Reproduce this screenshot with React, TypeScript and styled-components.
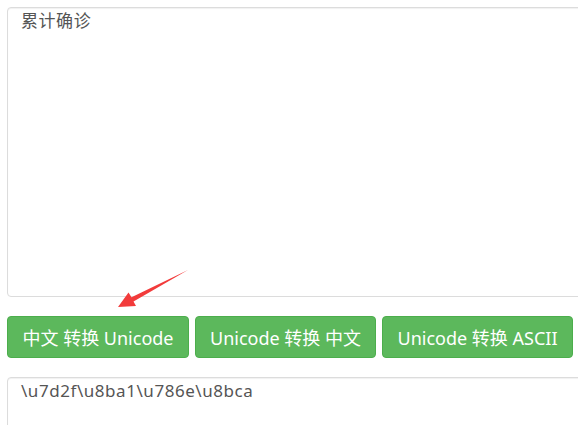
import styled, { createGlobalStyle } from "styled-components";

const GlobalStyle = createGlobalStyle`
  html, body {
    margin: 0;
    padding: 0;
    background: #fff;
    overflow: hidden;
  }
  body {
    font-family: "Noto Sans", "Noto Sans CJK SC", sans-serif;
  }
`;

const Page = styled.div`
  position: relative;
  box-sizing: border-box;
  width: 578px;
  height: 425px;
  padding: 7px;
  overflow: hidden;
`;

const TextBox = styled.textarea<{ $height: number }>`
  display: block;
  box-sizing: border-box;
  width: 575px;
  height: ${(p) => p.$height}px;
  margin: 0;
  padding: 1px 13px;
  border: 1px solid #dcdcdc;
  border-radius: 4px;
  box-shadow: inset 0 1px 1px rgba(0, 0, 0, 0.06);
  color: #555;
  font-family: "Noto Sans", "Noto Sans CJK SC", sans-serif;
  font-size: 17px;
  letter-spacing: 0.55px;
  line-height: 24px;
  resize: none;
  outline: none;
  overflow: hidden;
`;

const ButtonRow = styled.div`
  display: flex;
  gap: 6px;
  margin: 19px 0 19px;
`;

const Btn = styled.button<{ $width: number }>`
  box-sizing: border-box;
  flex-shrink: 0;
  width: ${(p) => p.$width}px;
  height: 42px;
  padding: 0;
  background: #5cb85c;
  border: 1px solid #4cae4c;
  border-radius: 4px;
  color: #fff;
  font-family: "Noto Sans", "Noto Sans CJK SC", sans-serif;
  font-size: 18px;
  cursor: pointer;
`;

const Arrow = styled.svg`
  position: absolute;
  left: 0;
  top: 0;
  pointer-events: none;
`;

const App = () => {
  return (
    <Page>
      <GlobalStyle />
      <TextBox $height={290} defaultValue="累计确诊" />
      <ButtonRow>
        <Btn $width={182}>中文 转换 Unicode</Btn>
        <Btn $width={181}>Unicode 转换 中文</Btn>
        <Btn $width={191}>Unicode 转换 ASCII</Btn>
      </ButtonRow>
      <TextBox $height={60} defaultValue={"\\u7d2f\\u8ba1\\u786e\\u8bca"} />
      <Arrow width="578" height="425" viewBox="0 0 578 425">
        <polygon
          points="188,270 131.5,297.2 128.5,292.5 118,307 136,306 133.5,301.5"
          fill="#f23b3b"
        />
      </Arrow>
    </Page>
  );
};

export default App;
